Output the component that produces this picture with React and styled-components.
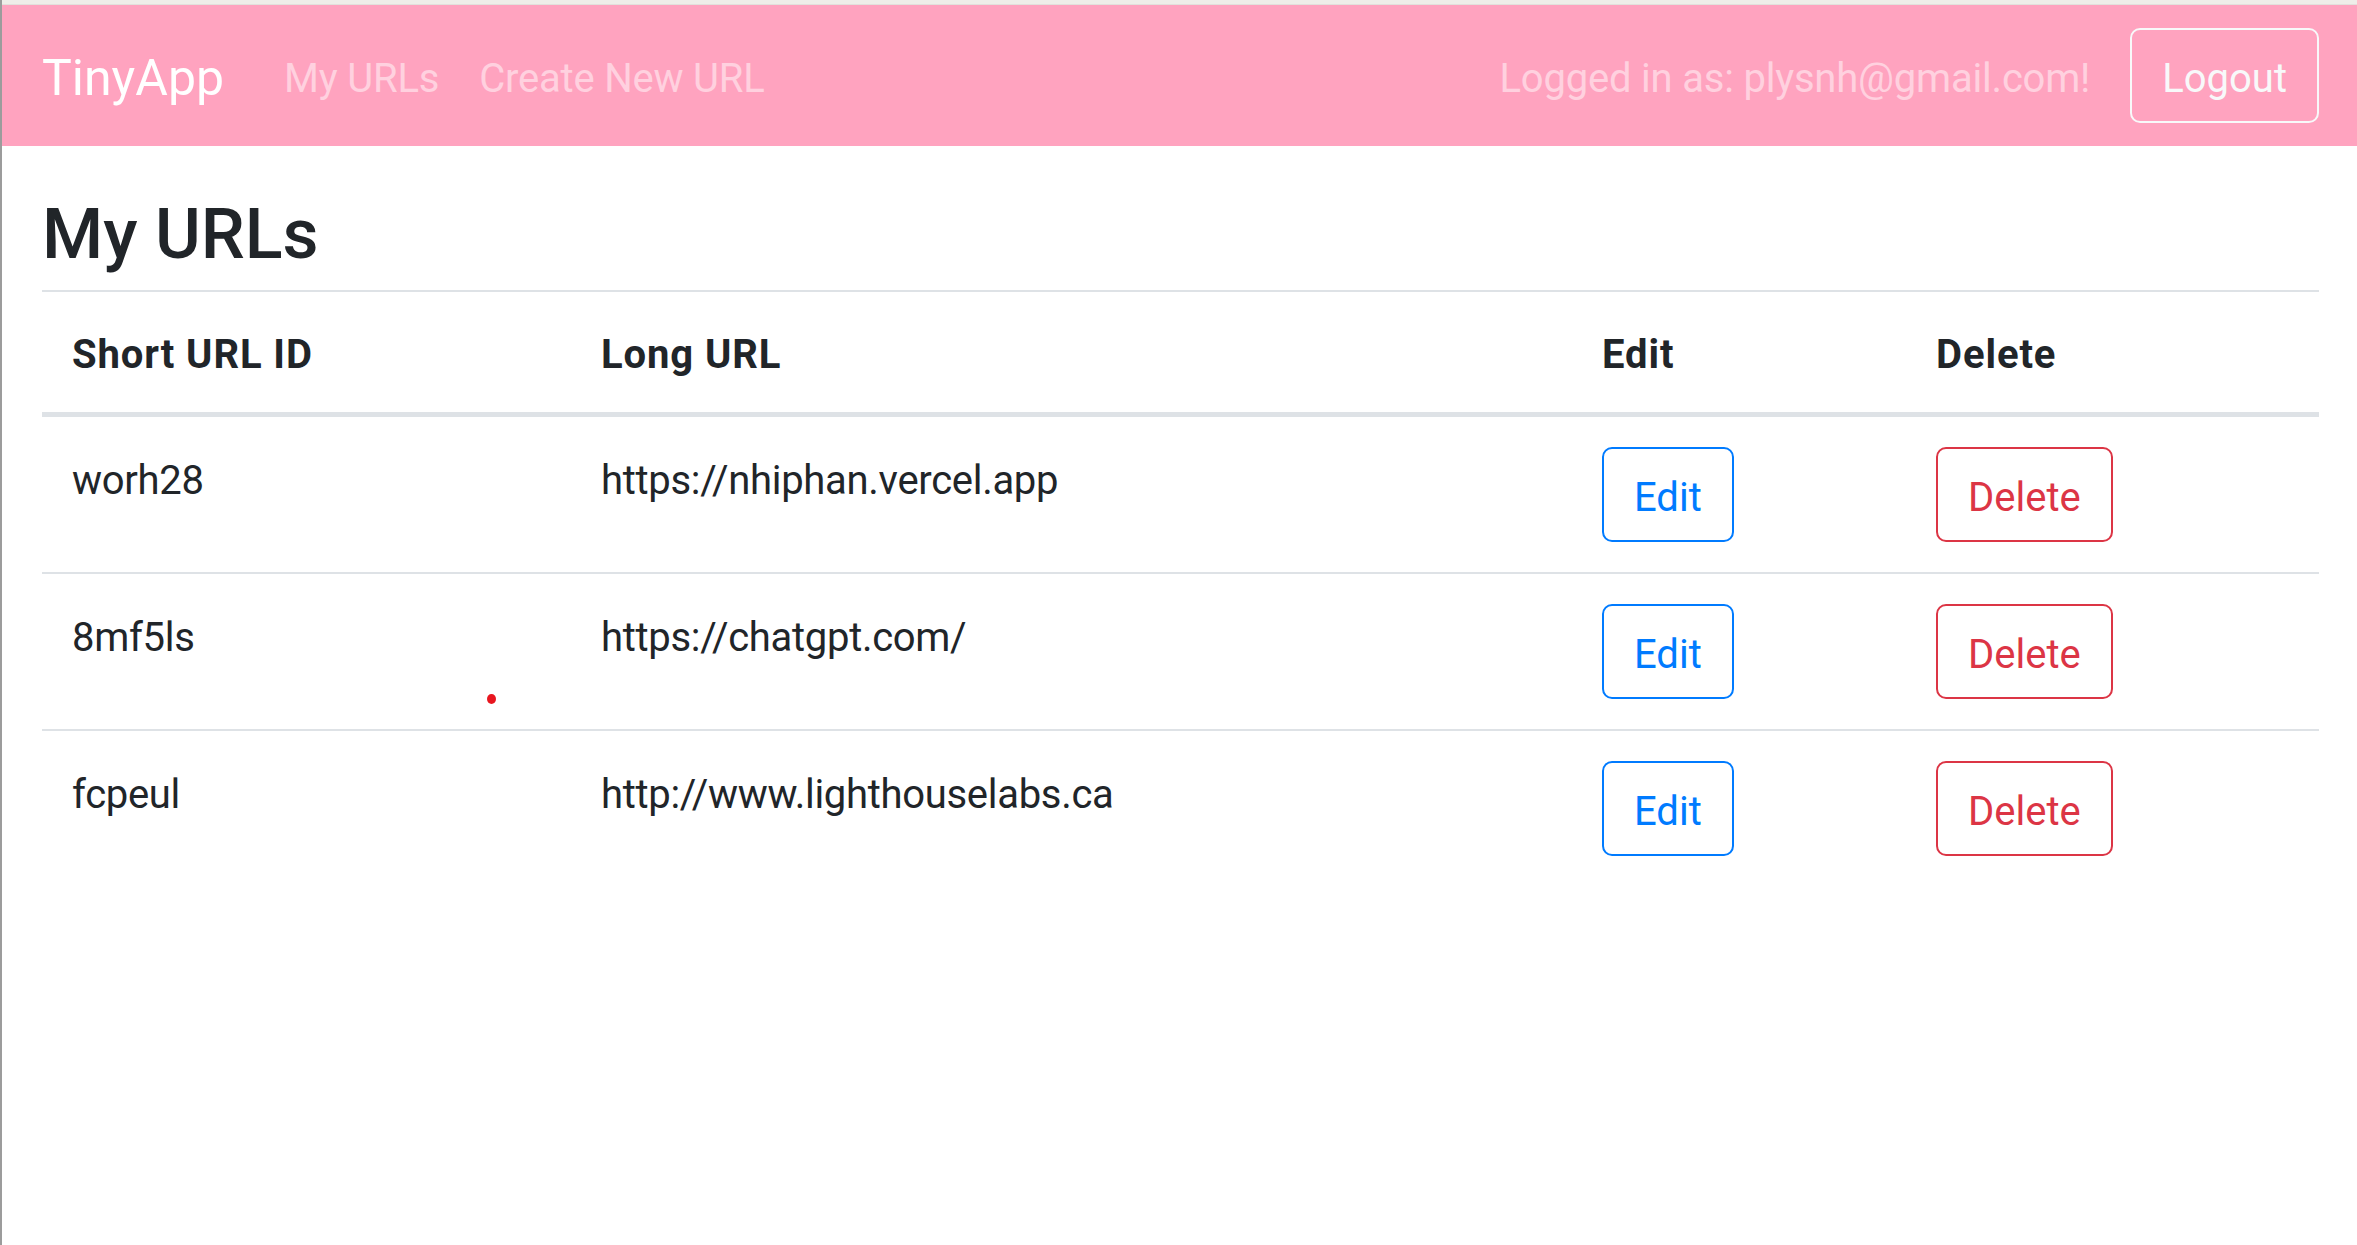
import React from "react";
import styled, { createGlobalStyle } from "styled-components";

const Global = createGlobalStyle`
  html, body { margin: 0; padding: 0; background: #fff; }
  body {
    font-family: Roboto, "Liberation Sans", Arial, sans-serif;
    font-size: 40px;
    line-height: 1.5;
    color: #212529;
  }
  * { box-sizing: border-box; }
`;

const Page = styled.div`
  position: relative;
  min-height: 1245px;
  border-left: 2px solid #9c9c9c;
`;

const TopStrip = styled.div`
  height: 5px;
  background: #efeee9;
  border-bottom: 1px solid #e2e1dc;
`;

const Navbar = styled.nav`
  display: flex;
  align-items: center;
  height: 141px;
  padding: 0 38px 0 40px;
  background: #ffa3bf;
`;

const Brand = styled.a`
  font-size: 50px;
  line-height: 75px;
  padding-top: 6px;
  color: #fff;
  margin-right: 40px;
  text-decoration: none;
`;

const NavLink = styled.a`
  padding: 6px 20px 0;
  font-size: 40px;
  line-height: 60px;
  letter-spacing: -0.2px;
  color: rgba(255, 255, 255, 0.5);
  text-decoration: none;
`;

const Spacer = styled.div`
  flex: 1;
`;

const UserText = styled.span`
  font-size: 40px;
  line-height: 60px;
  padding-top: 6px;
  letter-spacing: -0.2px;
  color: rgba(255, 255, 255, 0.5);
  margin-right: 40px;
`;

const OutlineButton = styled.button`
  font-family: inherit;
  font-size: 40px;
  line-height: 60px;
  padding: 19px 30px 12px;
  border-radius: 10px;
  background: transparent;
  cursor: pointer;
  border: 2px solid ${(p) => p.$color};
  color: ${(p) => p.$color};
`;

const Container = styled.main`
  padding: 0 38px 0 40px;
`;

const Title = styled.h1`
  margin: 46px 0 14px;
  font-size: 70px;
  font-weight: 500;
  line-height: 84px;
`;

const Table = styled.table`
  width: 100%;
  table-layout: fixed;
  border-spacing: 0;
  border-collapse: separate;
`;

const Th = styled.th`
  width: ${(p) => p.$w}px;
  text-align: left;
  font-weight: 700;
  padding: 33px 30px 27px;
  line-height: 60px;
  letter-spacing: 0.9px;
  vertical-align: bottom;
  border-top: 2px solid #dee2e6;
  border-bottom: 5px solid #dee2e6;
`;

const Row = styled.tr`
  &:not(:first-child) td {
    border-top: 2px solid #dee2e6;
  }
`;

const Td = styled.td`
  padding: ${(p) => (p.$text ? "34px 30px 26px" : "30px")};
  line-height: 60px;
  letter-spacing: ${(p) => (p.$text ? "-0.3px" : "normal")};
  vertical-align: top;
  white-space: nowrap;
`;

const Dot = styled.span`
  position: absolute;
  left: 485px;
  top: 694px;
  width: 9px;
  height: 10px;
  border-radius: 50%;
  background: #e8161f;
`;

const urls = [
  { id: "worh28", long: "https://nhiphan.vercel.app" },
  { id: "8mf5ls", long: "https://chatgpt.com/" },
  { id: "fcpeul", long: "http://www.lighthouselabs.ca" },
];

export default function App() {
  return (
    <>
      <Global />
      <Page>
        <TopStrip />
        <Navbar>
          <Brand href="#">TinyApp</Brand>
          <NavLink href="#">My URLs</NavLink>
          <NavLink href="#">Create New URL</NavLink>
          <Spacer />
          <UserText>Logged in as: plysnh@gmail.com!</UserText>
          <OutlineButton $color="#f8f9fa">Logout</OutlineButton>
        </Navbar>
        <Container>
          <Title>My URLs</Title>
          <Table>
            <thead>
              <tr>
                <Th $w={529}>Short URL ID</Th>
                <Th $w={1001}>Long URL</Th>
                <Th $w={334}>Edit</Th>
                <Th $w={413}>Delete</Th>
              </tr>
            </thead>
            <tbody>
              {urls.map((u) => (
                <Row key={u.id}>
                  <Td $text>{u.id}</Td>
                  <Td $text>{u.long}</Td>
                  <Td>
                    <OutlineButton $color="#007bff">Edit</OutlineButton>
                  </Td>
                  <Td>
                    <OutlineButton $color="#dc3545">Delete</OutlineButton>
                  </Td>
                </Row>
              ))}
            </tbody>
          </Table>
        </Container>
        <Dot />
      </Page>
    </>
  );
}
